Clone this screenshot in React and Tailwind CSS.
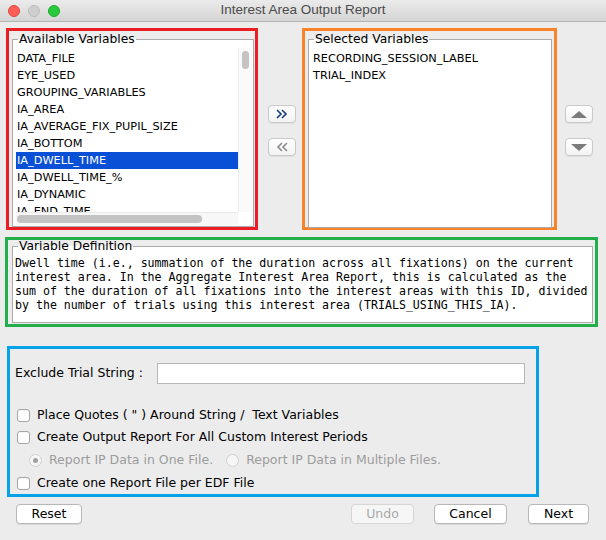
import React from "react";

const available = [
  "DATA_FILE",
  "EYE_USED",
  "GROUPING_VARIABLES",
  "IA_AREA",
  "IA_AVERAGE_FIX_PUPIL_SIZE",
  "IA_BOTTOM",
  "IA_DWELL_TIME",
  "IA_DWELL_TIME_%",
  "IA_DYNAMIC",
  "IA_END_TIME",
];

const selected = ["RECORDING_SESSION_LABEL", "TRIAL_INDEX"];

const definition = [
  "Dwell time (i.e., summation of the duration across all fixations) on the current",
  "interest area. In the Aggregate Interest Area Report, this is calculated as the",
  "sum of the duration of all fixations into the interest areas with this ID, divided",
  "by the number of trials using this interest area (TRIALS_USING_THIS_IA).",
];

const smallBtn =
  "w-[28px] h-[18px] rounded-[4px] border border-[#c9c9c9] bg-linear-to-b from-white to-[#f3f3f3] shadow-[0_1px_0_rgba(0,0,0,0.06)] flex items-center justify-center";

const pushBtn =
  "h-[20px] rounded-[4px] border border-[#b8b8b8] bg-white shadow-[0_1px_0_rgba(0,0,0,0.08)] text-[12.5px] leading-[18px] text-black flex items-center justify-center";

function Checkbox({ label }) {
  return (
    <div className="h-[22px] flex items-center pl-[7px]">
      <div className="w-[13px] h-[13px] rounded-[3px] border border-[#a6a6a6] bg-white shadow-[inset_0_1px_0_rgba(0,0,0,0.04)]" />
      <span className="ml-[7px] text-[12.5px] text-black whitespace-pre">{label}</span>
    </div>
  );
}

function Radio({ label, on }) {
  return (
    <div className="flex items-center">
      <div className="w-[13px] h-[13px] rounded-full border border-[#cfcfcf] bg-[#f6f6f6] flex items-center justify-center">
        {on ? <div className="w-[5px] h-[5px] rounded-full bg-[#a0a0a0]" /> : null}
      </div>
      <span className="ml-[7px] text-[12.5px] text-[#9c9c9c]">{label}</span>
    </div>
  );
}

export default function App() {
  return (
    <div className="w-[606px] h-[540px] bg-[#ececec] overflow-hidden font-['DejaVu_Sans',sans-serif] text-black select-none">
      {/* title bar */}
      <div className="h-[22px] border-b border-[#b4b4b4] bg-linear-to-b from-[#ebebeb] to-[#d5d5d5] flex items-center relative">
        <div className="flex items-center gap-[8px] pl-[8px]">
          <div className="w-[12px] h-[12px] rounded-full bg-[#fd5f57] border border-[#e0443e]" />
          <div className="w-[12px] h-[12px] rounded-full bg-[#cecece] border border-[#bcbcbc]" />
          <div className="w-[12px] h-[12px] rounded-full bg-[#27c93f] border border-[#1aab29]" />
        </div>
        <div className="absolute inset-0 flex items-center justify-center text-[13.5px] text-[#4b4b4b] font-['Liberation_Sans',sans-serif]">
          Interest Area Output Report
        </div>
      </div>

      {/* variables row */}
      <div className="flex mt-[6px]">
        <div className="ml-[6px] w-[252px] h-[202px] border-[3px] border-[#eb1d25] pt-[1px] pl-[3px] pr-[1px]">
          <fieldset className="h-[195px] border border-[#ababab] bg-white">
            <legend className="ml-[5px] px-[1px] text-[12.3px] leading-[15px]">Available Variables</legend>
            <div className="grid grid-cols-[222px_14px] grid-rows-[164px_13px] ml-[3px] mt-[1px]">
              <div className="overflow-hidden pt-[2px]">
                {available.map((v) => (
                  <div
                    key={v}
                    className={
                      "h-[17px] pl-[1px] text-[11.3px] leading-[17px] whitespace-nowrap " +
                      (v === "IA_DWELL_TIME" ? "bg-[#0a50d6] text-white" : "text-black")
                    }
                  >
                    {v}
                  </div>
                ))}
              </div>
              <div className="bg-[#fafafa] border-l border-[#ededed] pt-[3px] flex justify-center">
                <div className="w-[7px] h-[18px] rounded-full bg-[#c3c3c3]" />
              </div>
              <div className="bg-[#f7f7f7] border-t border-[#e9e9e9] flex items-center pl-[1px]">
                <div className="w-[185px] h-[8px] rounded-full bg-[#c3c3c3]" />
              </div>
              <div className="bg-white" />
            </div>
          </fieldset>
        </div>

        <div className="ml-[10px] w-[28px] pt-[77px] flex flex-col gap-[15px]">
          <div className={smallBtn}>
            <svg width="12" height="10" viewBox="0 0 12 10" fill="none" stroke="#143e7c" strokeWidth="1.6">
              <path d="M1 1 L5 5 L1 9 M6 1 L10 5 L6 9" />
            </svg>
          </div>
          <div className={smallBtn}>
            <svg width="12" height="10" viewBox="0 0 12 10" fill="none" stroke="#8a8a8a" strokeWidth="1.6">
              <path d="M6 1 L2 5 L6 9 M11 1 L7 5 L11 9" />
            </svg>
          </div>
        </div>

        <div className="ml-[6px] w-[255px] h-[202px] border-[3px] border-[#fa8329] pt-[1px] pl-[3px] pr-[2px]">
          <fieldset className="h-[196px] border border-[#ababab] bg-white">
            <legend className="ml-[5px] px-[1px] text-[12.3px] leading-[15px]">Selected Variables</legend>
            <div className="pl-[4px] pt-[3px]">
              {selected.map((v) => (
                <div key={v} className="h-[17px] text-[11.3px] leading-[17px] whitespace-nowrap">
                  {v}
                </div>
              ))}
            </div>
          </fieldset>
        </div>

        <div className="ml-[8px] w-[27px] pt-[77px] flex flex-col gap-[15px]">
          <div className={smallBtn}>
            <svg width="16" height="7" viewBox="0 0 16 7">
              <path d="M8 0 L16 7 L0 7 Z" fill="#7b7b7b" />
            </svg>
          </div>
          <div className={smallBtn}>
            <svg width="16" height="7" viewBox="0 0 16 7">
              <path d="M0 0 L16 0 L8 7 Z" fill="#7b7b7b" />
            </svg>
          </div>
        </div>
      </div>

      {/* definition */}
      <div className="ml-[5px] mt-[7px] w-[593px] h-[90px] border-[3px] border-[#21ae4b] pl-[4px] pr-[2px]">
        <fieldset className="h-[83px] border border-[#ababab] bg-white">
          <legend className="ml-[5px] px-[1px] text-[12.3px] leading-[12px]">Variable Definition</legend>
          <div className="pl-[2px] pt-[4px] font-['DejaVu_Sans_Mono',monospace] text-[11.6px] leading-[14px] whitespace-pre text-black">
            {definition.map((l) => (
              <div key={l}>{l}</div>
            ))}
          </div>
        </fieldset>
      </div>

      {/* options */}
      <div className="ml-[7px] mt-[19px] w-[532px] h-[151px] border-[3px] border-[#04a2e8]">
        <div className="flex items-center pt-[14px] pl-[5px]">
          <span className="text-[12.5px] w-[142px]">Exclude Trial String :</span>
          <div className="w-[368px] h-[21px] border border-[#b6b6b6] bg-white" />
        </div>
        <div className="mt-[20px]">
          <Checkbox label={'Place Quotes ( " ) Around String /  Text Variables'} />
          <Checkbox label="Create Output Report For All Custom Interest Periods" />
          <div className="h-[24px] flex items-center pl-[19px]">
            <Radio label="Report IP Data in One File." on />
            <div className="ml-[13px]">
              <Radio label="Report IP Data in Multiple Files." />
            </div>
          </div>
          <Checkbox label="Create one Report File per EDF File" />
        </div>
      </div>

      {/* buttons */}
      <div className="flex mt-[7px] pl-[16px] pr-[17px]">
        <div className={pushBtn + " w-[66px]"}>Reset</div>
        <div className="flex-1" />
        <div className="w-[63px] h-[20px] rounded-[4px] border border-[#d6d6d6] bg-[#f6f6f6] text-[12.5px] text-[#a9a9a9] flex items-center justify-center">
          Undo
        </div>
        <div className={pushBtn + " w-[73px] ml-[20px]"}>Cancel</div>
        <div className={pushBtn + " w-[61px] ml-[21px]"}>Next</div>
      </div>
    </div>
  );
}
